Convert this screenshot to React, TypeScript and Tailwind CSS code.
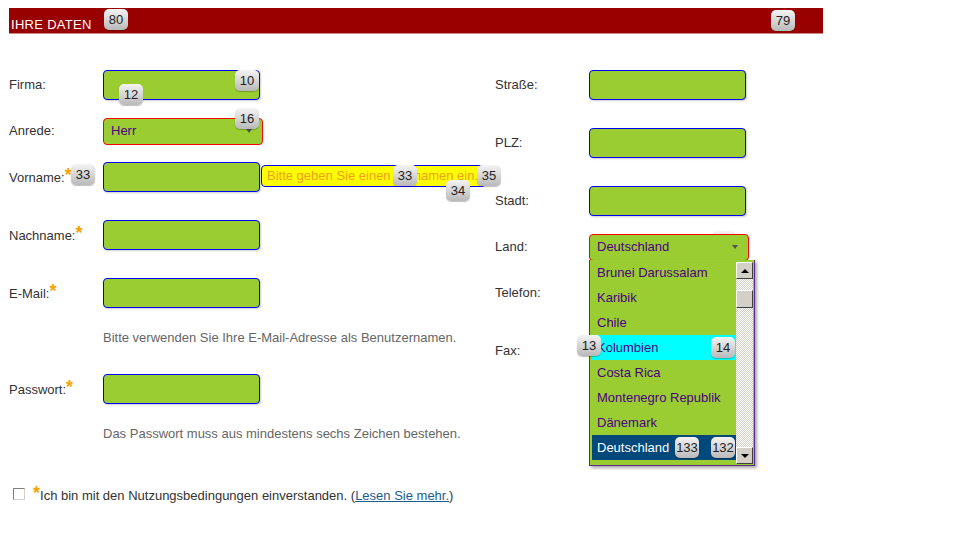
import React from "react";

const font = { fontFamily: '"Liberation Sans", Arial, sans-serif' };

function Badge({ n, cls }: { n: string; cls: string }) {
  return (
    <div
      className={`absolute ${cls} h-[21px] w-[24px] rounded-[5px] bg-[linear-gradient(#f4f4f4,#b9b9b9)] shadow-[0_1px_1px_rgba(0,0,0,0.25)] flex items-center justify-center text-[13px] leading-none text-[#222]`}
    >
      {n}
    </div>
  );
}

function Star() {
  return <span className="text-[18px] font-bold leading-none text-[#f5a300] align-[1px]">*</span>;
}

function Input({ w = "w-[157px]" }: { w?: string }) {
  return (
    <div className={`${w} h-[30px] rounded-[4px] border border-[#0000ff] bg-[#9acd32] shadow-[1px_1px_2px_rgba(0,0,0,0.2)]`} />
  );
}

function Select({ text }: { text: string }) {
  return (
    <div className="relative w-[160px] h-[27px] rounded-[4px] border border-[#ff0000] bg-[#9acd32] flex items-center pl-[7px] text-[13px] text-[#4b0082]">
      {text}
      <div className="ml-auto mr-[10px] w-0 h-0 border-l-[3px] border-r-[3px] border-t-[4px] border-l-transparent border-r-transparent border-t-[#555]" />
    </div>
  );
}

function Row({ label, star, mt, h = "h-[30px]", children }: { label: string; star?: boolean; mt: string; h?: string; children: React.ReactNode }) {
  return (
    <div className={`flex items-center ${mt} ${h}`}>
      <div className="w-[94px] text-[13px] text-[#333]">
        {label}
        {star && <Star />}
      </div>
      {children}
    </div>
  );
}

function ScrollBtn({ up }: { up: boolean }) {
  return (
    <div className="h-[17px] w-[17px] bg-[#d4d0c8] border-t border-l border-t-white border-l-white border-b border-r border-b-[#404040] border-r-[#404040] flex items-center justify-center">
      {up ? (
        <div className="w-0 h-0 border-l-[4px] border-r-[4px] border-b-[4px] border-l-transparent border-r-transparent border-b-black" />
      ) : (
        <div className="w-0 h-0 border-l-[4px] border-r-[4px] border-t-[4px] border-l-transparent border-r-transparent border-t-black" />
      )}
    </div>
  );
}

const countries = [
  "Brunei Darussalam",
  "Karibik",
  "Chile",
  "Kolumbien",
  "Costa Rica",
  "Montenegro Republik",
  "Dänemark",
  "Deutschland",
];

export default function App() {
  return (
    <div className="relative w-[970px] h-[542px] bg-white overflow-hidden" style={font}>
      <div className="ml-[9px] pt-[8px]">
        <div className="w-[814px] h-[26px] bg-[#990000] border-b border-b-[#c88] pt-[9px] pl-[2px] text-[13px] leading-[15px] tracking-[0.3px] text-white">
          IHRE DATEN
        </div>
      </div>

      <div className="flex pl-[9px] mt-[36px]">
        {/* left column */}
        <div className="w-[486px] flex flex-col">
          <Row label="Firma:" mt="mt-0">
            <Input />
          </Row>
          <Row label="Anrede:" mt="mt-[18px]" h="h-[26px]">
            <Select text="Herr" />
          </Row>
          <Row label="Vorname:" star mt="mt-[18px]">
            <Input />
          </Row>
          <Row label="Nachname:" star mt="mt-[28px]">
            <Input />
          </Row>
          <Row label="E-Mail:" star mt="mt-[28px]">
            <Input />
          </Row>
          <div className="mt-[22px] ml-[94px] text-[13px] leading-[15px] text-[#666]">
            Bitte verwenden Sie Ihre E-Mail-Adresse als Benutzernamen.
          </div>
          <Row label="Passwort:" star mt="mt-[29px]">
            <Input />
          </Row>
          <div className="mt-[22px] ml-[94px] text-[13px] leading-[15px] text-[#666]">
            Das Passwort muss aus mindestens sechs Zeichen bestehen.
          </div>
          <div className="mt-[45px] flex items-center h-[15px] text-[13px] leading-[15px] text-[#333]">
            <div className="ml-[4px] w-[12px] h-[12px] border border-t-[#808080] border-l-[#808080] border-b-[#d4d0c8] border-r-[#d4d0c8] bg-white" />
            <span className="ml-[8px]">
              <Star />
              Ich bin mit den Nutzungsbedingungen einverstanden. (
              <span className="text-[#1a5c8c] underline">Lesen Sie mehr.</span>)
            </span>
          </div>
        </div>

        {/* right column */}
        <div className="flex flex-col">
          <Row label="Straße:" mt="mt-0">
            <Input />
          </Row>
          <Row label="PLZ:" mt="mt-[28px]">
            <Input />
          </Row>
          <Row label="Stadt:" mt="mt-[28px]">
            <Input />
          </Row>
          <div className="relative z-10">
            <Row label="Land:" mt="mt-[18px]" h="h-[26px]">
              <Select text="Deutschland" />
            </Row>
            <div className="absolute left-[94px] top-[44px] w-[166px] h-[206px] bg-[#9acd32] border border-[#5b2a86] border-t-0 shadow-[2px_2px_3px_rgba(0,0,0,0.35)]">
              <div className="pl-[2px] w-[146px]">
                {countries.map((c, i) => (
                  <div
                    key={c}
                    className={`h-[25px] leading-[25px] pl-[5px] text-[13px] ${
                      i === 3
                        ? "bg-[#00ffff] text-[#4b0082]"
                        : i === 7
                        ? "bg-[#00497a] text-white"
                        : "text-[#4b0082]"
                    }`}
                  >
                    {c}
                  </div>
                ))}
              </div>
              <div className="absolute left-[146px] top-[2px] w-[17px] h-[202px] flex flex-col bg-[repeating-conic-gradient(#d4d0c8_0%_25%,#ffffff_0%_50%)] bg-[length:2px_2px]">
                <ScrollBtn up />
                <div className="mt-[11px] h-[18px] w-[17px] bg-[#d4d0c8] border-t border-l border-t-white border-l-white border-b border-r border-b-[#404040] border-r-[#404040]" />
                <div className="mt-auto">
                  <ScrollBtn up={false} />
                </div>
              </div>
            </div>
          </div>
          <Row label="Telefon:" mt="mt-[18px]">
            <Input />
          </Row>
          <Row label="Fax:" mt="mt-[28px]">
            <Input />
          </Row>
        </div>
      </div>

      {/* tooltip */}
      <div className="absolute left-[261px] top-[165px] w-[225px] h-[22px] rounded-[4px] border border-[#0000ff] bg-[#ffff00] pl-[5px] text-[13px] leading-[20px] text-[#f0a020] overflow-hidden whitespace-nowrap">
        Bitte geben Sie einen Vornamen ein.
      </div>

      <Badge n="80" cls="left-[104px] top-[9px]" />
      <Badge n="79" cls="left-[771px] top-[10px]" />
      <Badge n="10" cls="left-[235px] top-[70px]" />
      <Badge n="12" cls="left-[119px] top-[84px]" />
      <Badge n="16" cls="left-[235px] top-[108px]" />
      <Badge n="33" cls="left-[71px] top-[164px]" />
      <Badge n="33" cls="left-[393px] top-[165px]" />
      <Badge n="34" cls="left-[446px] top-[180px]" />
      <Badge n="35" cls="left-[477px] top-[165px]" />
      <Badge n="16" cls="left-[712px] top-[231px]" />
      <Badge n="13" cls="left-[577px] top-[335px] z-20" />
      <Badge n="14" cls="left-[711px] top-[337px] z-20" />
      <Badge n="133" cls="left-[675px] top-[437px] z-20" />
      <Badge n="132" cls="left-[711px] top-[437px] z-20" />
    </div>
  );
}
